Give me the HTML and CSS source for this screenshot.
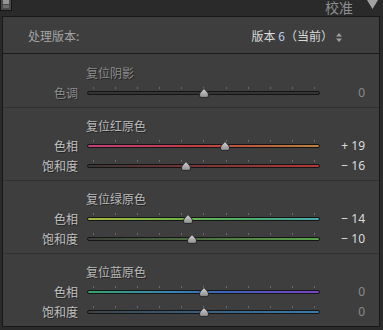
FILE: index.html
```html
<!DOCTYPE html>
<html lang="zh-CN">
<head>
    <meta charset="UTF-8">
    <meta name="viewport" content="width=device-width, initial-scale=1.0">
    <title>校准</title>
    <link rel="stylesheet" href="styles.css">
</head>
<body>
    <div class="topbar">
        <svg class="switch" width="12" height="11" viewBox="0 0 12 11">
            <rect x="0" y="0" width="12" height="11" fill="#161616"/>
            <rect x="1" y="0" width="10" height="10" fill="#4a4a4a"/>
            <rect x="3" y="0" width="6" height="4" fill="#959595"/>
            <rect x="3" y="5" width="6" height="3" fill="#6c6c6c"/>
        </svg>
        <div class="panel-title">
            <span>校准</span>
            <svg class="collapse" width="11" height="9" viewBox="0 0 11 9">
                <polygon points="0,0 11,0 5.5,9" fill="#a2a2a2"/>
            </svg>
        </div>
    </div>

    <div class="panel">
        <div class="process-row">
            <span class="process-label">处理版本:</span>
            <span class="process-value">版本 <span class="ver">6</span>（当前）<svg class="updown" width="6" height="9" viewBox="0 0 6 9"><polygon points="0,3.5 6,3.5 3,0" fill="#a0a0a0"/><polygon points="0,5.5 6,5.5 3,9" fill="#a0a0a0"/></svg></span>
        </div>

        <div class="section section-first dim">
            <div class="section-title">复位阴影</div>
            <div class="slider-row">
                <span class="slider-label">色调</span>
                <div class="track track-tint" style="--v: 0">
                    <div class="ticks"><i></i><i></i><i></i><i></i><i></i><i></i><i></i><i></i><i></i><i></i><i></i></div>
                    <svg class="thumb" viewBox="0 0 10 10"><use href="#thumb-shape"/></svg>
                </div>
                <span class="slider-value zero">0</span>
            </div>
        </div>

        <div class="section">
            <div class="section-title">复位红原色</div>
            <div class="slider-row">
                <span class="slider-label">色相</span>
                <div class="track track-red-hue" style="--v: 19">
                    <div class="ticks"><i></i><i></i><i></i><i></i><i></i><i></i><i></i><i></i><i></i><i></i><i></i></div>
                    <svg class="thumb" viewBox="0 0 10 10"><use href="#thumb-shape"/></svg>
                </div>
                <span class="slider-value">+ 19</span>
            </div>
            <div class="slider-row">
                <span class="slider-label">饱和度</span>
                <div class="track track-red-sat" style="--v: -16">
                    <div class="ticks"><i></i><i></i><i></i><i></i><i></i><i></i><i></i><i></i><i></i><i></i><i></i></div>
                    <svg class="thumb" viewBox="0 0 10 10"><use href="#thumb-shape"/></svg>
                </div>
                <span class="slider-value">− 16</span>
            </div>
        </div>

        <div class="section">
            <div class="section-title">复位绿原色</div>
            <div class="slider-row">
                <span class="slider-label">色相</span>
                <div class="track track-green-hue" style="--v: -14">
                    <div class="ticks"><i></i><i></i><i></i><i></i><i></i><i></i><i></i><i></i><i></i><i></i><i></i></div>
                    <svg class="thumb" viewBox="0 0 10 10"><use href="#thumb-shape"/></svg>
                </div>
                <span class="slider-value">− 14</span>
            </div>
            <div class="slider-row">
                <span class="slider-label">饱和度</span>
                <div class="track track-green-sat" style="--v: -10">
                    <div class="ticks"><i></i><i></i><i></i><i></i><i></i><i></i><i></i><i></i><i></i><i></i><i></i></div>
                    <svg class="thumb" viewBox="0 0 10 10"><use href="#thumb-shape"/></svg>
                </div>
                <span class="slider-value">− 10</span>
            </div>
        </div>

        <div class="section">
            <div class="section-title">复位蓝原色</div>
            <div class="slider-row">
                <span class="slider-label">色相</span>
                <div class="track track-blue-hue" style="--v: 0">
                    <div class="ticks"><i></i><i></i><i></i><i></i><i></i><i></i><i></i><i></i><i></i><i></i><i></i></div>
                    <svg class="thumb" viewBox="0 0 10 10"><use href="#thumb-shape"/></svg>
                </div>
                <span class="slider-value zero">0</span>
            </div>
            <div class="slider-row">
                <span class="slider-label">饱和度</span>
                <div class="track track-blue-sat" style="--v: 0">
                    <div class="ticks"><i></i><i></i><i></i><i></i><i></i><i></i><i></i><i></i><i></i><i></i><i></i></div>
                    <svg class="thumb" viewBox="0 0 10 10"><use href="#thumb-shape"/></svg>
                </div>
                <span class="slider-value zero">0</span>
            </div>
        </div>
    </div>

    <!-- shared slider thumb -->
    <svg width="0" height="0" class="defs">
        <defs>
            <linearGradient id="thumb-fill" x1="0" y1="0" x2="0" y2="1">
                <stop offset="0" stop-color="#d2d2d2"/>
                <stop offset="1" stop-color="#8e8e8e"/>
            </linearGradient>
            <path id="thumb-shape" d="M5 0.6 C6 2 9.4 4.3 9.4 6.3 L9.4 8 Q9.4 9.4 8 9.4 L2 9.4 Q0.6 9.4 0.6 8 L0.6 6.3 C0.6 4.3 4 2 5 0.6 Z" fill="url(#thumb-fill)" stroke="#262626" stroke-width="1"/>
        </defs>
    </svg>
</body>
</html>
```

FILE: styles.css
```css
body {
    margin: 0;
    padding: 0;
    background-color: #2a2a2a;
    font-family: "Noto Sans CJK SC", "Noto Sans", sans-serif;
    font-size: 12px;
    color: #b6b6b6;
}
.defs {
    position: absolute;
}
.topbar {
    height: 16px;
    display: flex;
    justify-content: space-between;
}
.switch {
    display: block;
}
.panel-title {
    display: flex;
    align-items: flex-start;
    gap: 14px;
    padding-right: 5px;
}
.panel-title span {
    font-size: 14px;
    line-height: 15px;
    color: #8e8e8e;
}
.collapse {
    display: block;
}
.panel {
    margin: 0 3px 0 2px;
    background-color: #3e3e3e;
    border: 1px solid #181818;
}
.process-row {
    height: 36px;
    display: flex;
    align-items: center;
    justify-content: space-between;
    padding: 0 37px 0 25px;
    border-bottom: 1px solid #1c1c1c;
}
.process-label {
    color: #a4a4a4;
}
.process-value {
    color: #dadada;
}
.ver {
    color: #bcd0ec;
}
.updown {
    margin-left: 3px;
    vertical-align: -1px;
}
.section {
    padding: 8px 0 5px;
    border-top: 1px solid #323232;
}
.section-first {
    padding-top: 9px;
    border-top: none;
}
.section-title {
    height: 19px;
    line-height: 19px;
    padding-left: 83px;
    color: #b8b8b8;
    text-shadow: 1px 1px 0 rgba(0, 0, 0, 0.45);
}
.slider-row {
    height: 20px;
    display: flex;
    align-items: center;
}
.slider-label {
    width: 75px;
    text-align: right;
    margin-right: 9px;
    color: #c0c0c0;
    text-shadow: 1px 1px 0 rgba(0, 0, 0, 0.45);
}
.dim .section-title,
.dim .slider-label {
    color: #8c8c8c;
}
.track {
    position: relative;
    box-sizing: border-box;
    width: 233px;
    height: 4px;
    margin-top: 1px;
    border: 1px solid #151515;
    border-radius: 2px;
}
.ticks {
    position: absolute;
    left: 5px;
    right: 4px;
    top: -5px;
    height: 2px;
    display: flex;
    justify-content: space-between;
}
.ticks i {
    width: 1px;
    background-color: #6a6a6a;
}
.thumb {
    position: absolute;
    top: -4px;
    left: calc(50% - 5px + var(--v) * 1.11px);
    width: 10px;
    height: 10px;
    overflow: visible;
}
.slider-value {
    width: 45px;
    text-align: right;
    font-family: "Noto Sans", "Noto Sans CJK SC", sans-serif;
    color: #dcdcdc;
    white-space: pre;
}
.slider-value.zero {
    color: #8a8a8a;
}
.track-tint {
    background: #343434;
}
.track-red-hue {
    background: linear-gradient(to right, #c2407e, #c23c44 45%, #bd5a3e 70%, #b8843c);
}
.track-red-sat {
    background: linear-gradient(to right, #3a3636, #6a3434 35%, #b43a3a);
}
.track-green-hue {
    background: linear-gradient(to right, #a8b83c, #6cb446 40%, #4cac6c 70%, #48aab0);
}
.track-green-sat {
    background: linear-gradient(to right, #3e403c, #4c6a40 40%, #5aa44a);
}
.track-blue-hue {
    background: linear-gradient(to right, #34a470, #3a84b0 35%, #3c62ba 60%, #7a44c2);
}
.track-blue-sat {
    background: linear-gradient(to right, #3e4246, #3a5a74 40%, #3a7cae);
}
```
